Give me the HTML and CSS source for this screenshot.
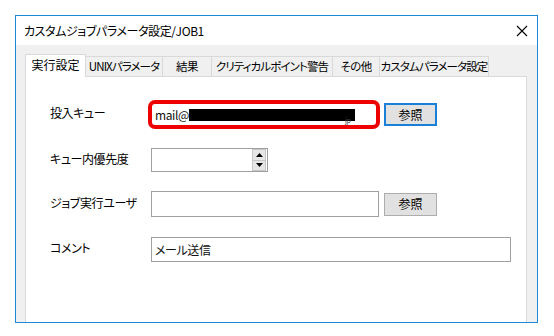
FILE: index.html
```html
<!DOCTYPE html>
<html lang="ja">
<head>
<meta charset="utf-8">
<link rel="stylesheet" href="styles.css">
</head>
<body>
<div class="window">
  <div class="titlebar">
    <span class="title">カスタムジョブパラメータ設定/JOB1</span>
    <svg class="close" width="12" height="12" viewBox="0 0 12 12"><path d="M1 1L11 11M11 1L1 11" stroke="#000" stroke-width="1.1"/></svg>
  </div>
  <div class="body">
    <div class="tabs">
      <div class="tab active t1">実行設定</div>
      <div class="tab t2">UNIXパラメータ</div>
      <div class="tab t3">結果</div>
      <div class="tab t4">クリティカルポイント警告</div>
      <div class="tab t5">その他</div>
      <div class="tab t6">カスタムパラメータ設定</div>
    </div>
    <div class="panel">
      <div class="row r1">
        <span class="label">投入キュー</span>
        <div class="field highlight"><span class="val">mail@</span><span class="redact"></span><span class="jp">jp</span></div>
        <button class="btn focused">参照</button>
      </div>
      <div class="row r2">
        <span class="label">キュー内優先度</span>
        <div class="field spin">
          <div class="spinbtns">
            <div class="sb"><svg width="7" height="4" viewBox="0 0 7 4"><path d="M0 4L3.5 0L7 4Z" fill="#000"/></svg></div>
            <div class="sb"><svg width="7" height="4" viewBox="0 0 7 4"><path d="M0 0L3.5 4L7 0Z" fill="#000"/></svg></div>
          </div>
        </div>
      </div>
      <div class="row r3">
        <span class="label">ジョブ実行ユーザ</span>
        <div class="field user"></div>
        <button class="btn">参照</button>
      </div>
      <div class="row r4">
        <span class="label">コメント</span>
        <div class="field comment"><span class="val">メール送信</span></div>
      </div>
    </div>
  </div>
</div>
</body>
</html>
```
FILE: styles.css
```css
* { box-sizing: border-box; }
html, body { margin: 0; padding: 0; background: #fff; }
body {
  font-family: "Noto Sans CJK JP", "Noto Sans", sans-serif;
  font-size: 12px;
  font-feature-settings: "palt";
  letter-spacing: -0.4px;
  color: #000;
  width: 554px;
  height: 336px;
  overflow: hidden;
}
.window {
  margin: 15px 0 0 15px;
  width: 523px;
  height: 308px;
  border: 1px solid #1a8ad8;
  background: #f0f0f0;
  display: flex;
  flex-direction: column;
}
.titlebar {
  height: 29px;
  background: #fff;
  display: flex;
  align-items: center;
  justify-content: space-between;
  padding: 0 9px 0 8px;
  flex: none;
}
.title { line-height: 16px; }
.close { display: block; }
.body {
  flex: 1;
  display: flex;
  flex-direction: column;
  padding: 9px 10px 0 9px;
}
.tabs {
  display: flex;
  align-items: flex-end;
  height: 22px;
  flex: none;
  position: relative;
  z-index: 1;
}
.tab {
  flex: none;
  height: 20px;
  border: 1px solid #d9d9d9;
  border-bottom: none;
  border-left: none;
  background: #f0f0f0;
  display: flex;
  align-items: center;
  justify-content: center;
  white-space: nowrap;
  line-height: 16px;
  padding-bottom: 1px;
  font-size: 11.5px;
  letter-spacing: -0.9px;
}
.tab.active {
  height: 23px;
  background: #fff;
  border-left: 1px solid #d9d9d9;
  margin-bottom: -1px;
  padding-bottom: 2px;
  font-size: 12px;
  letter-spacing: 0;
}
.t1 { width: 61px; }
.t2 { width: 77px; }
.t3 { width: 49px; letter-spacing: -0.5px; }
.t4 { width: 121px; }
.t5 { width: 47px; letter-spacing: -0.6px; }
.t6 { width: 109px; }
.panel {
  flex: 1;
  background: #fff;
  border: 1px solid #d9d9d9;
  border-bottom: none;
  padding: 23px 0 0 24px;
  display: flex;
  flex-direction: column;
}
.row {
  display: flex;
  align-items: center;
}
.label {
  width: 101px;
  flex: none;
  line-height: 16px;
  padding-bottom: 3px;
}
.field {
  flex: none;
  border: 1px solid #7a7a7a;
  background: #fff;
  display: flex;
  align-items: center;
  padding-left: 3px;
  line-height: 16px;
}
.r1 { height: 29px; }
.r2 { height: 24px; margin-top: 19px; }
.r3 { height: 26px; margin-top: 19px; }
.r4 { height: 25px; margin-top: 20px; }
.highlight {
  width: 232px;
  height: 29px;
  margin-left: -3px;
  border: 4px solid #ee0000;
  border-radius: 7px;
  padding-left: 3px;
  position: relative;
}
.val { color: #111; flex: none; }
.redact {
  flex: none;
  display: inline-block;
  width: 166px;
  height: 12px;
  background: #000;
}
.jp {
  position: absolute;
  left: 193px;
  top: 8px;
  font-size: 7px;
  color: #444;
}
.btn {
  flex: none;
  font: inherit;
  font-feature-settings: "palt";
  letter-spacing: 0;
  width: 53px;
  height: 23px;
  margin-left: 4px;
  background: #e1e1e1;
  border: 1px solid #adadad;
  padding: 0;
  color: #000;
  line-height: 16px;
}
.btn.focused {
  border: 2px solid #1a7fd6;
}
.r3 .btn { margin-left: 5px; }
.spin {
  width: 117px;
  height: 24px;
  border-color: #a0a0a0;
  justify-content: flex-end;
  padding: 0 1px 0 0;
}
.spinbtns {
  display: flex;
  flex-direction: column;
  width: 14px;
  height: 22px;
}
.sb {
  flex: 1;
  background: #e6e6e6;
  border: 1px solid #c6c6c6;
  display: flex;
  align-items: center;
  justify-content: center;
}
.sb + .sb { border-top: none; }
.sb svg { display: block; }
.user {
  width: 228px;
  height: 26px;
  border-color: #a0a0a0;
}
.comment {
  width: 360px;
  height: 25px;
  border-color: #a0a0a0;
}
```
